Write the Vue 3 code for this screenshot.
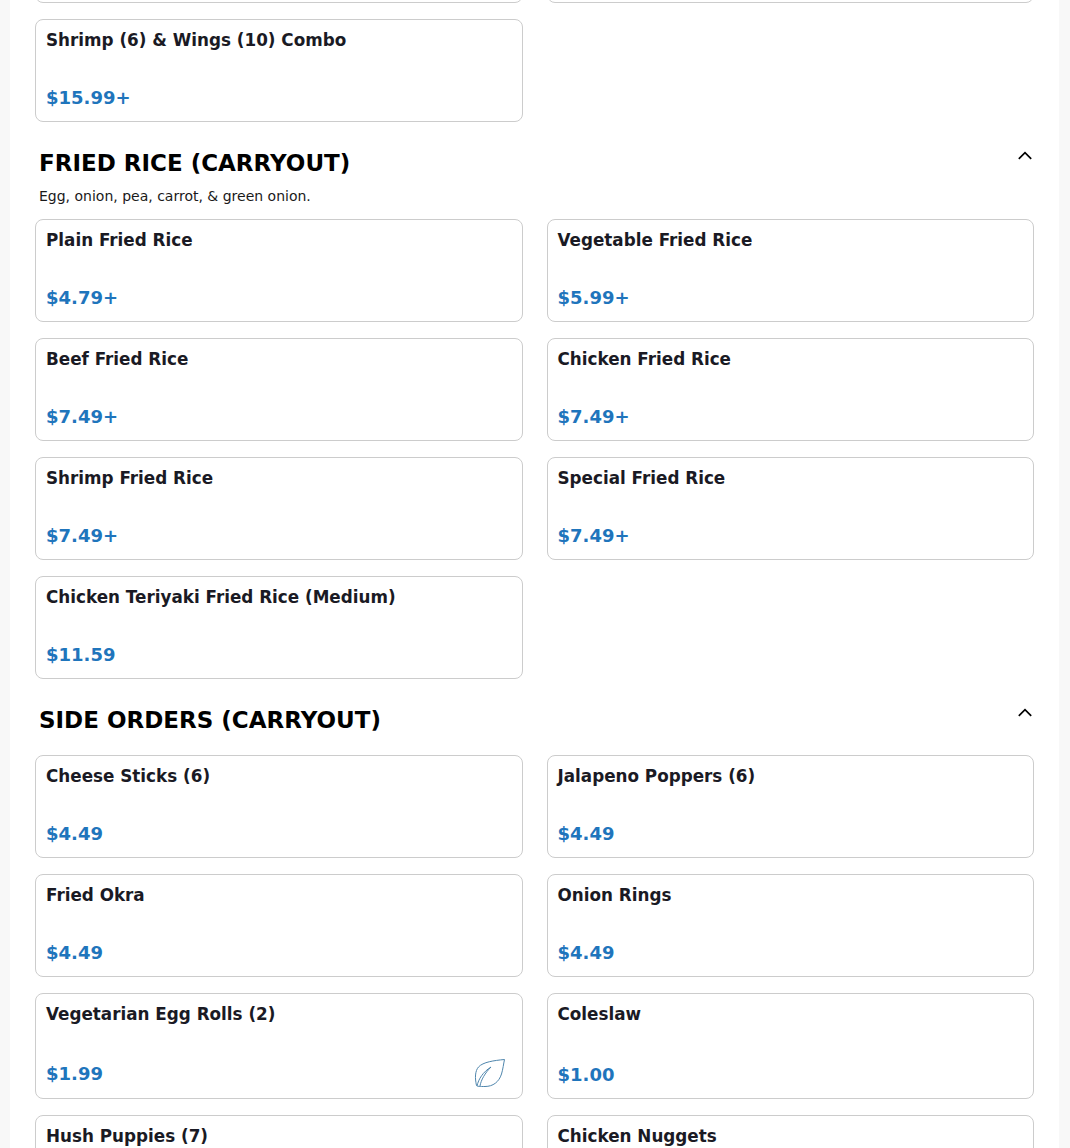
<template>
  <div class="page">
    <div class="content">
      <section class="section first">
        <div class="items">
          <div class="item"></div>
          <div class="item"></div>
          <div class="item" v-for="item in combos" :key="item.name">
            <div class="item-name">{{ item.name }}</div>
            <div class="item-price">{{ item.price }}</div>
          </div>
        </div>
      </section>

      <section class="section" v-for="section in sections" :key="section.title">
        <div class="section-head">
          <h2>{{ section.title }}</h2>
          <svg class="chevron" width="16" height="16" viewBox="0 0 16 16" fill="none">
            <path d="M1.800 10.800 8 4.600l6.200 6.200" stroke="#000" stroke-width="1.700" />
          </svg>
        </div>
        <p class="section-desc" v-if="section.desc">{{ section.desc }}</p>
        <div class="items">
          <div class="item" v-for="item in section.items" :key="item.name">
            <div class="item-name">{{ item.name }}</div>
            <div class="item-bottom" :class="{ 'has-leaf': item.veg }" v-if="item.price">
              <div class="item-price">{{ item.price }}</div>
              <svg v-if="item.veg" class="leaf" width="32" height="30" viewBox="0 0 32 30" fill="none">
                <path d="M30.500 1.500C20 2.500 9 4 4.500 9 1 13 .8 20 2.500 27.500 3 28.500 6 28.500 11 28.500 19 28.500 25 24 27.500 16 29 11 29.500 6 30.500 1.500Z" stroke="#4f86ad" stroke-width="1" />
                <path d="M3 28C4.500 21 9 14 17 9M6 28C7 22 11 15 17 9" stroke="#4f86ad" stroke-width="1" />
              </svg>
            </div>
          </div>
        </div>
      </section>
    </div>
  </div>
</template>

<script setup>
const combos = [{ name: "Shrimp (6) & Wings (10) Combo", price: "$15.99+" }];

const sections = [
  {
    title: "FRIED RICE (CARRYOUT)",
    desc: "Egg, onion, pea, carrot, & green onion.",
    items: [
      { name: "Plain Fried Rice", price: "$4.79+" },
      { name: "Vegetable Fried Rice", price: "$5.99+" },
      { name: "Beef Fried Rice", price: "$7.49+" },
      { name: "Chicken Fried Rice", price: "$7.49+" },
      { name: "Shrimp Fried Rice", price: "$7.49+" },
      { name: "Special Fried Rice", price: "$7.49+" },
      { name: "Chicken Teriyaki Fried Rice (Medium)", price: "$11.59" },
    ],
  },
  {
    title: "SIDE ORDERS (CARRYOUT)",
    items: [
      { name: "Cheese Sticks (6)", price: "$4.49" },
      { name: "Jalapeno Poppers (6)", price: "$4.49" },
      { name: "Fried Okra", price: "$4.49" },
      { name: "Onion Rings", price: "$4.49" },
      { name: "Vegetarian Egg Rolls (2)", price: "$1.99", veg: true },
      { name: "Coleslaw", price: "$1.00" },
      { name: "Hush Puppies (7)" },
      { name: "Chicken Nuggets" },
    ],
  },
];
</script>

<style>
html,
body {
  background: #f8f8f8;
}
</style>

<style scoped>
.page {
  height: 1148px;
  overflow: hidden;
  font-family: "DejaVu Sans", sans-serif;
}

.content {
  width: 1049px;
  margin: -100px 0 0 10px;
  padding: 0 25px;
  box-sizing: border-box;
  background: #fff;
}

.section-head {
  display: flex;
  justify-content: space-between;
  align-items: flex-start;
  padding: 24px 0 0 4px;
}

h2 {
  margin: 0;
  font-size: 23px;
  line-height: 34px;
  font-weight: 700;
  color: #000;
}

.chevron {
  margin: 2px 1px 0 0;
}

.section-desc {
  margin: 6px 0 0 4px;
  font-size: 14px;
  line-height: 20px;
  color: #1a1a1a;
}

.items {
  display: grid;
  grid-template-columns: 1fr 1fr;
  column-gap: 24px;
  row-gap: 16px;
  margin-top: 13px;
}

.section-head + .items {
  margin-top: 18px;
}

.first .items {
  margin-top: 0;
}

.item {
  display: flex;
  flex-direction: column;
  justify-content: space-between;
  min-height: 103px;
  padding: 8px 10px 11px;
  box-sizing: border-box;
  border: 1px solid #ccc;
  border-radius: 8px;
}

.item-name {
  margin-bottom: 33px;
  font-size: 16.8px;
  line-height: 24px;
  font-weight: 700;
  color: #1a1a24;
}

.item-bottom {
  display: flex;
  justify-content: space-between;
  align-items: center;
}

.item-price {
  font-size: 18px;
  line-height: 24px;
  font-weight: 700;
  color: #1f75bc;
}

.has-leaf .item-price {
  padding-top: 2px;
}

.leaf {
  margin: -1px 6px -1px 0;
}
</style>
